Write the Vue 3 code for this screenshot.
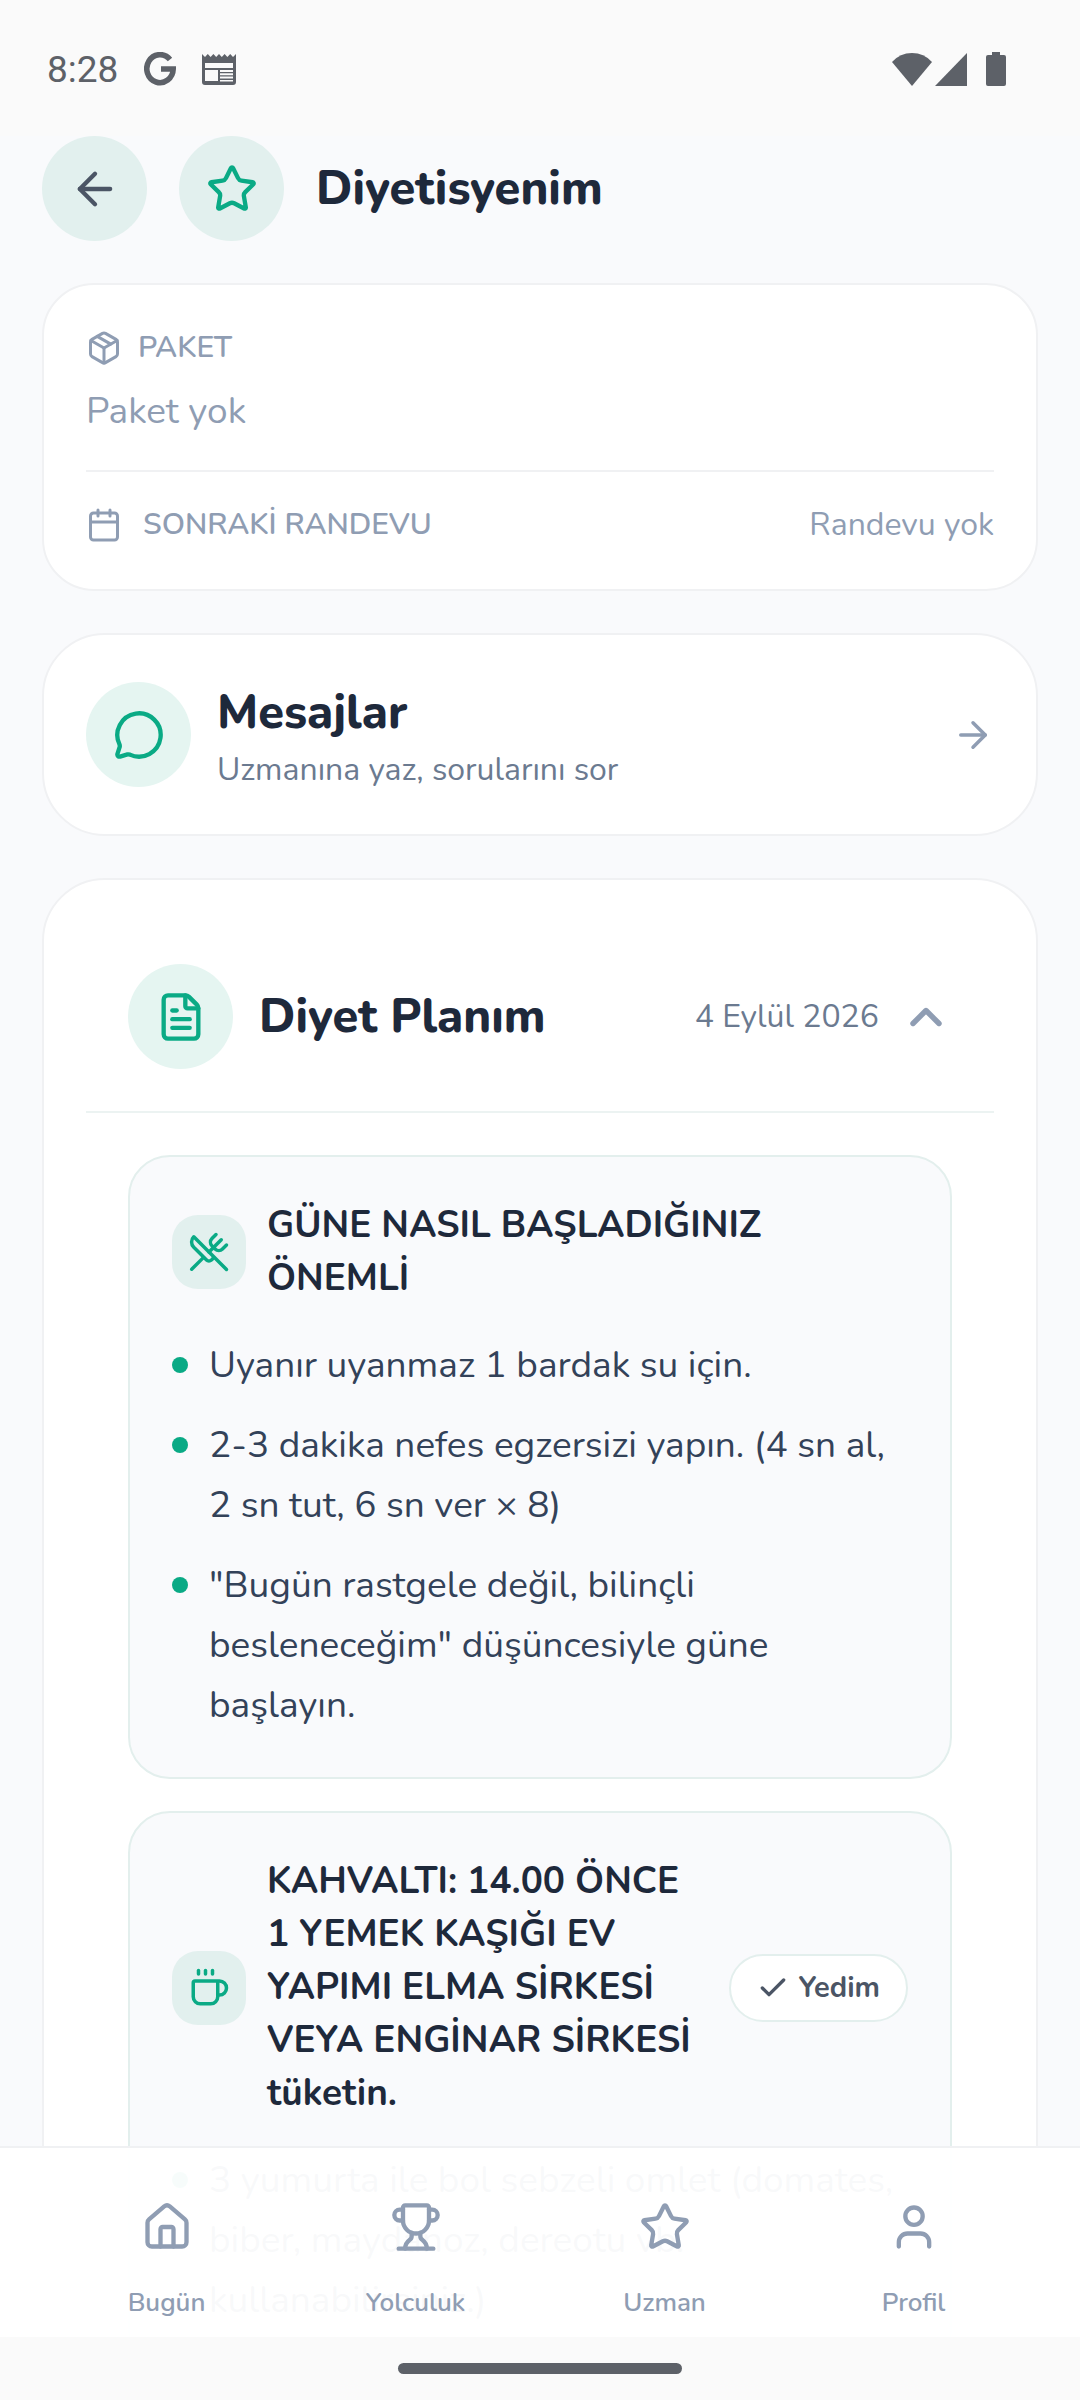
<script setup>
import { ref } from 'vue'

const icons = {
  back: ['m12 19-7-7 7-7', 'M19 12H5'],
  arrow: ['M5 12h14', 'm12 5 7 7-7 7'],
  up: ['m18 15-6-6-6 6'],
  check: ['M20 6 9 17l-5-5'],
  star: ['M11.525 2.295a.53.53 0 0 1 .95 0l2.31 4.679a2.123 2.123 0 0 0 1.595 1.16l5.166.756a.53.53 0 0 1 .294.904l-3.736 3.638a2.123 2.123 0 0 0-.611 1.878l.882 5.14a.53.53 0 0 1-.771.56l-4.618-2.428a2.122 2.122 0 0 0-1.973 0L6.396 21.01a.53.53 0 0 1-.77-.56l.881-5.139a2.122 2.122 0 0 0-.611-1.879L2.16 9.795a.53.53 0 0 1 .294-.906l5.165-.755a2.122 2.122 0 0 0 1.597-1.16z'],
  box: ['M11 21.73a2 2 0 0 0 2 0l7-4A2 2 0 0 0 21 16V8a2 2 0 0 0-1-1.73l-7-4a2 2 0 0 0-2 0l-7 4A2 2 0 0 0 3 8v8a2 2 0 0 0 1 1.73z', 'M12 22V12', 'M3.29 7 12 12l8.71-5', 'm7.5 4.27 9 5.15'],
  calendar: ['M8 2v4', 'M16 2v4', 'M5 4h14a2 2 0 0 1 2 2v14a2 2 0 0 1-2 2H5a2 2 0 0 1-2-2V6a2 2 0 0 1 2-2z', 'M3 10h18'],
  message: ['M2.992 16.342a2 2 0 0 1 .094 1.167l-1.065 3.29a1 1 0 0 0 1.236 1.168l3.413-.998a2 2 0 0 1 1.099.092 10 10 0 1 0-4.777-4.719'],
  file: ['M6 22a2 2 0 0 1-2-2V4a2 2 0 0 1 2-2h8a2.4 2.4 0 0 1 1.704.706l3.588 3.588A2.4 2.4 0 0 1 20 8v12a2 2 0 0 1-2 2z', 'M14 2v5a1 1 0 0 0 1 1h5', 'M10 9H8', 'M16 13H8', 'M16 17H8'],
  utensils: ['m16 2-2.3 2.3a3 3 0 0 0 0 4.2l1.8 1.8a3 3 0 0 0 4.2 0L22 8', 'M15 15 3.3 3.3a4.2 4.2 0 0 0 0 6l7.3 7.3c.7.7 2 .7 2.8 0L15 15Zm0 0 7 7', 'm2.1 21.8 6.4-6.3', 'm19 5-7 7'],
  coffee: ['M10 2v2', 'M14 2v2', 'M6 2v2', 'M16 8a1 1 0 0 1 1 1v8a4 4 0 0 1-4 4H7a4 4 0 0 1-4-4V9a1 1 0 0 1 1-1h14a4 4 0 1 1 0 8h-1'],
  home: ['M15 21v-8a1 1 0 0 0-1-1h-4a1 1 0 0 0-1 1v8', 'M3 10a2 2 0 0 1 .709-1.528l7-6a2 2 0 0 1 2.582 0l7 6A2 2 0 0 1 21 10v9a2 2 0 0 1-2 2H5a2 2 0 0 1-2-2z'],
  trophy: ['M10 14.66v1.626a2 2 0 0 1-.976 1.696A5 5 0 0 0 7 21.978', 'M14 14.66v1.626a2 2 0 0 0 .976 1.696A5 5 0 0 1 17 21.978', 'M18 9h1.5a1 1 0 0 0 0-5H18', 'M4 22h16', 'M6 9a6 6 0 0 0 12 0V3a1 1 0 0 0-1-1H7a1 1 0 0 0-1 1z', 'M6 9H4.5a1 1 0 0 1 0-5H6'],
  user: ['M19 21v-2a4 4 0 0 0-4-4H9a4 4 0 0 0-4 4v2', 'M16 7a4 4 0 1 1-8 0 4 4 0 0 1 8 0z'],
}

const meals = [
  {
    icon: 'utensils',
    title: 'GÜNE NASIL BAŞLADIĞINIZ\nÖNEMLİ',
    items: [
      'Uyanır uyanmaz 1 bardak su için.',
      '2-3 dakika nefes egzersizi yapın. (4 sn al,\n2 sn tut, 6 sn ver × 8)',
      '"Bugün rastgele değil, bilinçli\nbesleneceğim" düşüncesiyle güne\nbaşlayın.',
    ],
  },
  {
    icon: 'coffee',
    title: 'KAHVALTI: 14.00 ÖNCE\n1 YEMEK KAŞIĞI EV\nYAPIMI ELMA SİRKESİ\nVEYA ENGİNAR SİRKESİ\ntüketin.',
    action: 'Yedim',
    items: ['3 yumurta ile bol sebzeli omlet (domates,\nbiber, maydanoz, dereotu vb.\nkullanabilirsiniz.)'],
  },
]

const tabs = [
  { icon: 'home', label: 'Bugün' },
  { icon: 'trophy', label: 'Yolculuk' },
  { icon: 'star', label: 'Uzman' },
  { icon: 'user', label: 'Profil' },
]

const open = ref(true)
</script>

<template>
  <div class="screen">
    <div class="status">
      <span class="time">8:28</span>
      <svg class="g" viewBox="0 0 32 34"><path d="M26 7.500A13.200 14 0 1 0 29.200 17H17" fill="none" stroke="currentColor" stroke-width="5.600" /></svg>
      <svg class="news" viewBox="0 0 34 31"><path fill="currentColor" fill-rule="evenodd" d="M0 0l3 3 2.800-3 2.800 3 2.800-3 2.800 3L17 0l2.800 3 2.800-3 2.800 3 2.800-3L31 3l3-3v28a3 3 0 0 1-3 3H3a3 3 0 0 1-3-3zM3 9v5h28V9zM3 16v11h13V16zM18 16v2h13v-2zm0 3.300v2h13v-2zm0 3.300v2h13v-2zm0 3.300v1.600h13v-1.600z" /></svg>
      <span class="grow"></span>
      <svg class="wifi" viewBox="0 0 40 33"><path fill="currentColor" d="M0 9Q8 0 20 0t20 9L20 33z" /></svg>
      <svg class="signal" viewBox="0 0 32 33"><path fill="currentColor" d="M32 0v33H0z" /></svg>
      <svg class="battery" viewBox="0 0 20 34"><path fill="currentColor" d="M6 0h8v3h4a2 2 0 0 1 2 2v27a2 2 0 0 1-2 2H2a2 2 0 0 1-2-2V5a2 2 0 0 1 2-2h4z" /></svg>
    </div>

    <main class="content">
      <header class="header">
        <button class="round" type="button" aria-label="Geri">
          <svg class="icon lg slate" viewBox="0 0 24 24"><path v-for="d in icons.back" :key="d" :d="d" /></svg>
        </button>
        <span class="round">
          <svg class="icon lg" viewBox="0 0 24 24"><path v-for="d in icons.star" :key="d" :d="d" /></svg>
        </span>
        <h1 class="title">Diyetisyenim</h1>
      </header>

      <section class="card package">
        <div class="caption">
          <svg class="icon sm" viewBox="0 0 24 24"><path v-for="d in icons.box" :key="d" :d="d" /></svg>
          <span>PAKET</span>
        </div>
        <p class="none">Paket yok</p>
        <div class="appointment">
          <div class="caption wide">
            <svg class="icon sm" viewBox="0 0 24 24"><path v-for="d in icons.calendar" :key="d" :d="d" /></svg>
            <span>SONRAKİ RANDEVU</span>
          </div>
          <span class="small">Randevu yok</span>
        </div>
      </section>

      <a class="card messages" href="#mesajlar">
        <span class="round pale">
          <svg class="icon lg" viewBox="0 0 24 24"><path v-for="d in icons.message" :key="d" :d="d" /></svg>
        </span>
        <span class="labels">
          <strong class="title">Mesajlar</strong>
          <span class="small dark">Uzmanına yaz, sorularını sor</span>
        </span>
        <svg class="icon md muted" viewBox="0 0 24 24"><path v-for="d in icons.arrow" :key="d" :d="d" /></svg>
      </a>

      <section class="card plan">
        <button class="plan-head" type="button" :aria-expanded="open" @click="open = !open">
          <span class="round pale">
            <svg class="icon lg" viewBox="0 0 24 24"><path v-for="d in icons.file" :key="d" :d="d" /></svg>
          </span>
          <span class="title grow">Diyet Planım</span>
          <span class="date">
            <span class="small dark">4 Eylül 2026</span>
            <svg class="icon lg muted bold" viewBox="0 0 24 24"><path v-for="d in icons.up" :key="d" :d="d" /></svg>
          </span>
        </button>
        <div v-if="open" class="meals">
          <article v-for="meal in meals" :key="meal.icon" class="meal">
            <div class="meal-head">
              <span class="tile">
                <svg class="icon md" viewBox="0 0 24 24"><path v-for="d in icons[meal.icon]" :key="d" :d="d" /></svg>
              </span>
              <h2>{{ meal.title }}</h2>
              <button v-if="meal.action" class="pill" type="button">
                <svg class="icon xs bold" viewBox="0 0 24 24"><path v-for="d in icons.check" :key="d" :d="d" /></svg>
                {{ meal.action }}
              </button>
            </div>
            <ul>
              <li v-for="item in meal.items" :key="item">{{ item }}</li>
            </ul>
          </article>
        </div>
      </section>

      <nav class="tabs">
        <a v-for="tab in tabs" :key="tab.label" href="#">
          <svg class="icon lg" viewBox="0 0 24 24"><path v-for="d in icons[tab.icon]" :key="d" :d="d" /></svg>
          <span>{{ tab.label }}</span>
        </a>
      </nav>
    </main>

    <div class="gesture"><span></span></div>
  </div>
</template>

<style>
body {
  background: #fafafa;
}
</style>

<style scoped>
* {
  box-sizing: border-box;
  margin: 0;
  padding: 0;
}
.screen {
  display: flex;
  flex-direction: column;
  height: 100vh;
  overflow: hidden;
  background: #fafafa;
  color: #1e293b;
  font-family: Nunito, Lato, "Noto Sans", sans-serif;
}
button {
  border: 0;
  background: none;
  color: inherit;
  font: inherit;
  text-align: left;
}
a {
  color: inherit;
  text-decoration: none;
}
.grow {
  flex: 1;
}
.status {
  flex: none;
  display: flex;
  align-items: center;
  height: 136px;
  padding: 2px 74px 0 47px;
  color: #5d6168;
}
.time {
  padding-top: 2px;
  font: 400 37px/40px Roboto, sans-serif;
}
.g {
  width: 32px;
  height: 34px;
  margin-left: 26px;
}
.news {
  width: 34px;
  height: 31px;
  margin-left: 26px;
}
.wifi {
  width: 40px;
  height: 33px;
  margin-right: 3px;
}
.signal {
  width: 32px;
  height: 33px;
  margin-right: 19px;
}
.battery {
  width: 20px;
  height: 34px;
}
.content {
  position: relative;
  flex: 1;
  min-height: 0;
  overflow: hidden;
  padding: 0 42px;
  background: #f9fafc;
}
.header {
  display: flex;
  align-items: center;
  gap: 32px;
  margin-bottom: 42px;
}
.round {
  flex: none;
  display: flex;
  align-items: center;
  justify-content: center;
  width: 105px;
  height: 105px;
  border-radius: 50%;
  background: #e2f0ee;
}
.pale {
  background: #e5f5f1;
}
.title {
  font-size: 47px;
  line-height: 60px;
  font-weight: 800;
}
.icon {
  flex: none;
  fill: none;
  stroke: currentColor;
  stroke-width: 2;
  stroke-linecap: round;
  stroke-linejoin: round;
}
.round .icon,
.tile .icon {
  color: #0aaa85;
}
.round .slate {
  color: #4b5565;
}
.muted {
  color: #8f9db3;
}
.bold {
  stroke-width: 2.5;
}
.xs {
  width: 32px;
  height: 32px;
}
.sm {
  width: 36px;
  height: 36px;
}
.md {
  width: 42px;
  height: 42px;
}
.lg {
  width: 52px;
  height: 52px;
}
.card {
  margin-bottom: 42px;
  padding: 42px;
  border: 2px solid #f0f1f3;
  border-radius: 63px;
  background: #fff;
}
.package {
  border-radius: 52px;
  color: #8f9db3;
}
.caption {
  display: flex;
  align-items: center;
  gap: 16px;
  font-size: 30px;
  line-height: 42px;
  font-weight: 600;
}
.wide {
  gap: 21px;
}
.none {
  margin-top: 14px;
  font-size: 37px;
  line-height: 56px;
}
.appointment {
  display: flex;
  align-items: center;
  justify-content: space-between;
  min-height: 77px;
  margin-top: 31px;
  padding-top: 30px;
  border-top: 2px solid #f0f1f3;
}
.small {
  font-size: 32px;
  line-height: 42px;
}
.dark {
  color: #6b7a90;
}
.messages {
  display: flex;
  align-items: center;
  gap: 26px;
}
.labels {
  flex: 1;
  display: flex;
  flex-direction: column;
  gap: 6px;
  padding: 6px 0 1px;
}
.plan-head {
  display: flex;
  align-items: center;
  gap: 26px;
  width: 100%;
  padding: 42px;
  border-bottom: 2px solid #ecf3f2;
}
.date {
  display: flex;
  align-items: center;
  gap: 21px;
}
.meals {
  display: flex;
  flex-direction: column;
  gap: 32px;
  padding: 42px;
}
.meal {
  padding: 42px;
  border: 2px solid #e3efed;
  border-radius: 42px;
  background: #f9fafc;
}
.meal-head {
  display: flex;
  align-items: center;
  gap: 21px;
  margin-bottom: 30px;
}
.tile {
  flex: none;
  display: flex;
  align-items: center;
  justify-content: center;
  width: 74px;
  height: 74px;
  border-radius: 26px;
  background: #e2f0ee;
}
h2 {
  flex: 1;
  font-size: 37px;
  line-height: 53px;
  font-weight: 700;
  white-space: pre-line;
}
.pill {
  display: flex;
  align-items: center;
  gap: 10px;
  height: 68px;
  padding: 0 26px;
  border: 2px solid #e3efed;
  border-radius: 34px;
  background: #fff;
  color: #4b5565;
  font-size: 29px;
  font-weight: 700;
}
ul {
  display: flex;
  flex-direction: column;
  gap: 20px;
  list-style: none;
}
li {
  display: flex;
  gap: 21px;
  color: #334259;
  font-size: 37px;
  line-height: 60px;
  white-space: pre-line;
}
li::before {
  content: "";
  flex: none;
  width: 16px;
  height: 16px;
  margin-top: 22px;
  border-radius: 50%;
  background: #0aaa85;
}
.tabs {
  position: absolute;
  right: 0;
  bottom: 0;
  left: 0;
  display: flex;
  padding: 53px 42px 16px;
  border-top: 2px solid #f0f1f3;
  background: rgba(255, 255, 255, 0.97);
  color: #8f9db3;
}
.tabs a {
  flex: 1;
  display: flex;
  flex-direction: column;
  align-items: center;
  gap: 32px;
  font-size: 26px;
  line-height: 36px;
  font-weight: 600;
}
.gesture {
  flex: none;
  display: flex;
  align-items: center;
  justify-content: center;
  height: 63px;
}
.gesture span {
  width: 284px;
  height: 11px;
  border-radius: 6px;
  background: #5d6168;
}
</style>
